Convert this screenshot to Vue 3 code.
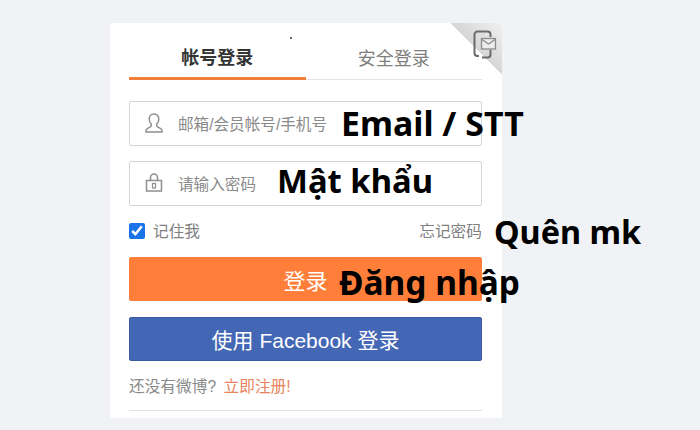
<script setup>
const fields = [
  { placeholder: '邮箱/会员帐号/手机号', icon: 'user', note: 'Email / STT', noteClass: 'note-email' },
  { placeholder: '请输入密码', icon: 'lock', note: 'Mật khẩu', noteClass: 'note-pass' }
]
</script>

<template>
  <div class="page">
    <section class="card">
      <div class="corner">
        <svg class="corner-icon" width="24" height="29" viewBox="0 0 24 29" fill="none">
          <path d="M6 26H4.500A3 3 0 0 1 1.500 23V4.500A3 3 0 0 1 4.500 1.500h10A3 3 0 0 1 17.500 4.500V7" stroke="#6a6a6a" stroke-width="2"/>
          <path d="M17.500 20v4.500a3 3 0 0 1-3 3H9" stroke="#6a6a6a" stroke-width="2"/>
          <rect x="8.500" y="8.500" width="14" height="10.500" fill="#ebebeb" stroke="#8a8a8a" stroke-width="1.300"/>
          <path d="M9 9.500l6.500 4.500L22 9.500" stroke="#8a8a8a" stroke-width="1.300"/>
        </svg>
      </div>

      <nav class="tabs">
        <div class="tab active">帐号登录</div>
        <div class="tab">安全登录</div>
      </nav>

      <form class="form" @submit.prevent>
        <div v-for="f in fields" :key="f.icon" class="field">
          <svg v-if="f.icon === 'user'" class="field-icon" width="20" height="22" viewBox="0 0 20 22" fill="none" stroke="#8f8f8f" stroke-width="1.500">
            <path d="M10 2c-3 0-4.800 2.300-4.800 5.200 0 2 .9 3.700 2.100 4.800v1.500c0 .8-.5 1.300-1.300 1.700l-2.300 1.200C2.500 17 2 17.800 2 19v1h16v-1c0-1.200-.5-2-1.700-2.600L14 15.200c-.8-.4-1.300-.9-1.300-1.700V12c1.200-1.100 2.100-2.800 2.100-4.800C14.800 4.300 13 2 10 2z"/>
          </svg>
          <svg v-else class="field-icon" width="20" height="22" viewBox="0 0 20 22" fill="none" stroke="#8f8f8f" stroke-width="1.500">
            <rect x="2.500" y="8.500" width="15" height="10.500"/>
            <path d="M6.500 8.500V5.500a3.500 3.500 0 0 1 7 0v3"/>
            <rect x="8.500" y="11.500" width="3" height="4.500" stroke-width="1.200"/>
          </svg>
          <span class="placeholder">{{ f.placeholder }}</span>
          <span class="note" :class="f.noteClass">{{ f.note }}</span>
        </div>

        <div class="options">
          <label class="remember">
            <input type="checkbox" class="check" checked />
            <span>记住我</span>
          </label>
          <span class="forgot">忘记密码</span>
          <span class="note note-forgot">Quên mk</span>
        </div>

        <button type="button" class="btn btn-login">
          <span>登录</span>
          <span class="note note-login">Đăng nhập</span>
        </button>
        <button type="button" class="btn btn-fb">使用 Facebook 登录</button>

        <p class="register">还没有微博? <span class="register-link">立即注册!</span></p>
      </form>

      <div class="rule"></div>
    </section>
    <i class="speck"></i>
  </div>
</template>

<style>
html, body { margin: 0; background: #f1f2f6; }
</style>

<style scoped>
.page {
  position: relative;
  width: 700px;
  height: 430px;
  box-sizing: border-box;
  padding: 23px 0 0 110px;
  overflow: hidden;
  background: #f1f2f6;
  font-family: "Liberation Sans", "Noto Sans CJK SC", sans-serif;
}
.card {
  position: relative;
  width: 392px;
  height: 395px;
  box-sizing: border-box;
  padding: 0 20px 0 19px;
  background: #fff;
  border-radius: 2px;
}
.corner {
  position: absolute;
  top: 0;
  right: 0;
  width: 52px;
  height: 52px;
  background: linear-gradient(45deg, transparent 50%, #d6d6d6 50%, #f0f0f0 100%);
}
.corner-icon {
  position: absolute;
  top: 7px;
  right: 5px;
}
.tabs {
  display: flex;
  height: 57px;
  border-bottom: 1px solid #e3e3e3;
  box-sizing: border-box;
}
.tab {
  flex: 1;
  display: flex;
  align-items: center;
  justify-content: center;
  padding-top: 12px;
  box-sizing: border-box;
  font-size: 18px;
  color: #808080;
}
.tab.active {
  height: 57px;
  border-bottom: 3px solid #f0803c;
  color: #333;
  font-weight: 700;
}
.form {
  display: flex;
  flex-direction: column;
  padding-top: 21px;
}
.field {
  position: relative;
  display: flex;
  align-items: center;
  height: 45px;
  box-sizing: border-box;
  margin-bottom: 15px;
  padding-left: 14px;
  background: #fff;
  border: 1px solid #d4d4d4;
  border-radius: 2px;
}
.field-icon {
  flex: none;
  margin-bottom: 2px;
}
.placeholder {
  margin-left: 14px;
  margin-bottom: 2px;
  font-size: 15.6px;
  color: #8a8a8a;
}
.note {
  position: absolute;
  font-family: "Noto Sans", "Open Sans", sans-serif;
  font-weight: 700;
  line-height: 40px;
  color: #000;
  white-space: nowrap;
}
.note-email { left: 211px; top: 1px; font-size: 33.900px; }
.note-pass { left: 147px; top: -1px; font-size: 32.800px; }
.note-forgot { left: 365px; top: -9px; font-size: 32.400px; }
.note-login { left: 210px; top: 5px; font-size: 33.500px; }
.options {
  position: relative;
  display: flex;
  align-items: center;
  justify-content: space-between;
  height: 22px;
  margin-top: -1px;
  margin-bottom: 15px;
  font-size: 15.700px;
  color: #808080;
}
.remember {
  display: flex;
  align-items: center;
  gap: 8px;
}
.remember span, .forgot {
  margin-bottom: 2px;
}
.check {
  width: 16px;
  height: 16px;
  margin: 0;
  accent-color: #1a73e8;
}
.btn {
  position: relative;
  display: block;
  width: 353px;
  height: 44px;
  margin: 0 0 16px;
  border: 0;
  border-radius: 2px;
  color: #fff;
  font-family: inherit;
  font-size: 22px;
}
.btn-login {
  background: #ff7f3a;
}
.btn-fb {
  background: #4467b5;
  border: 1px solid #3b5aa3;
  font-size: 21px;
}
.register {
  margin: 0;
  font-size: 15.700px;
  line-height: 20px;
  color: #8a8a8a;
}
.register-link {
  margin-left: 3px;
  color: #e8825a;
}
.rule {
  margin-top: 13px;
  height: 1px;
  background: #e3e3e3;
}
.speck {
  position: absolute;
  left: 290px;
  top: 37px;
  width: 2px;
  height: 2px;
  border-radius: 50%;
  background: #333;
}
</style>
